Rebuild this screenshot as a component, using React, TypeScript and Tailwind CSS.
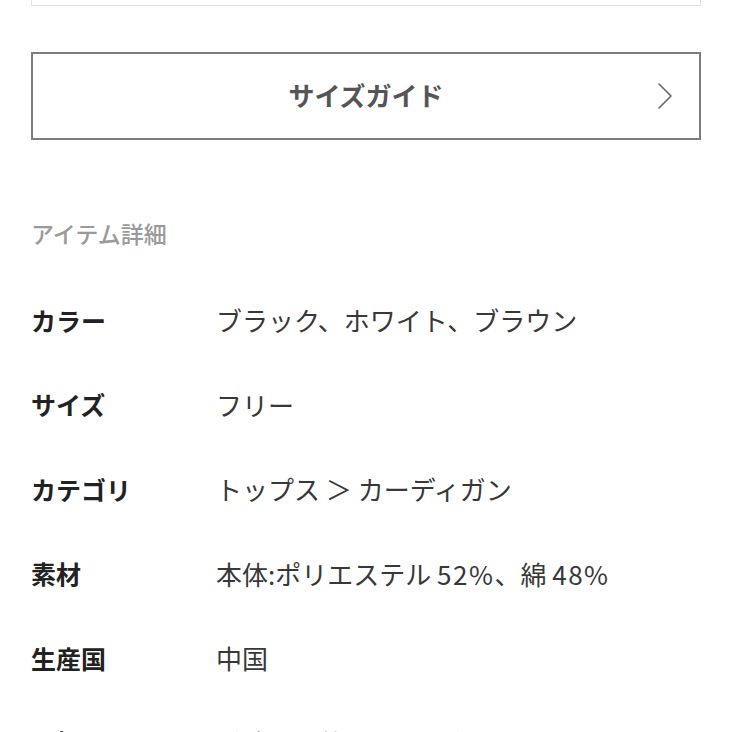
import React from 'react';

const details: { label: string; value: string }[] = [
  { label: 'カラー', value: 'ブラック、ホワイト、ブラウン' },
  { label: 'サイズ', value: 'フリー' },
  { label: 'カテゴリ', value: 'トップス ＞ カーディガン' },
  { label: '素材', value: '本体:ポリエステル 52%、綿 48%' },
  { label: '生産国', value: '中国' },
  { label: '取扱い', value: '手洗い可能（ネット使用）' },
];

// numbers like "52%" sit a bit wider in the reference font
const renderValue = (v: string) =>
  v.split(/(\d+%)/).map((part, i) =>
    /^\d+%$/.test(part) ? (
      <span key={i} className="tracking-[1.5px]">{part}</span>
    ) : (
      <React.Fragment key={i}>{part}</React.Fragment>
    )
  );

const App: React.FC = () => {
  return (
    <div className="w-[732px] h-[732px] overflow-hidden bg-white px-[31px] font-['Noto_Sans_CJK_JP','Noto_Sans',sans-serif]">
      {/* previous block, cut off at top */}
      <div className="h-[6px] border-x border-b border-[#e3e3e3]" />

      <button
        type="button"
        className="relative mt-[46px] flex h-[88px] w-full items-center justify-center border-2 border-[#7c7c7c] bg-white pb-[3px]"
      >
        <span className="text-[26px] font-bold leading-none text-[#555]">サイズガイド</span>
        <svg
          className="absolute right-[26px] top-1/2 -translate-y-1/2"
          width="16"
          height="28"
          viewBox="0 0 16 28"
          fill="none"
        >
          <path d="M2 2 L14 14 L2 26" stroke="#666" strokeWidth="1.6" strokeLinecap="round" strokeLinejoin="round" />
        </svg>
      </button>

      <h2 className="mt-[82px] text-[23px] font-medium leading-[22px] text-[#9a9a9a]">アイテム詳細</h2>

      <div className="mt-[34px]">
        {details.map((d) => (
          <div key={d.label} className="flex h-[84.5px] items-center">
            <div className="w-[185px] shrink-0 text-[25px] font-bold leading-none text-[#222]">{d.label}</div>
            <div className="whitespace-pre text-[26px] leading-none text-[#383838]">{renderValue(d.value)}</div>
          </div>
        ))}
      </div>
    </div>
  );
};

export default App;
